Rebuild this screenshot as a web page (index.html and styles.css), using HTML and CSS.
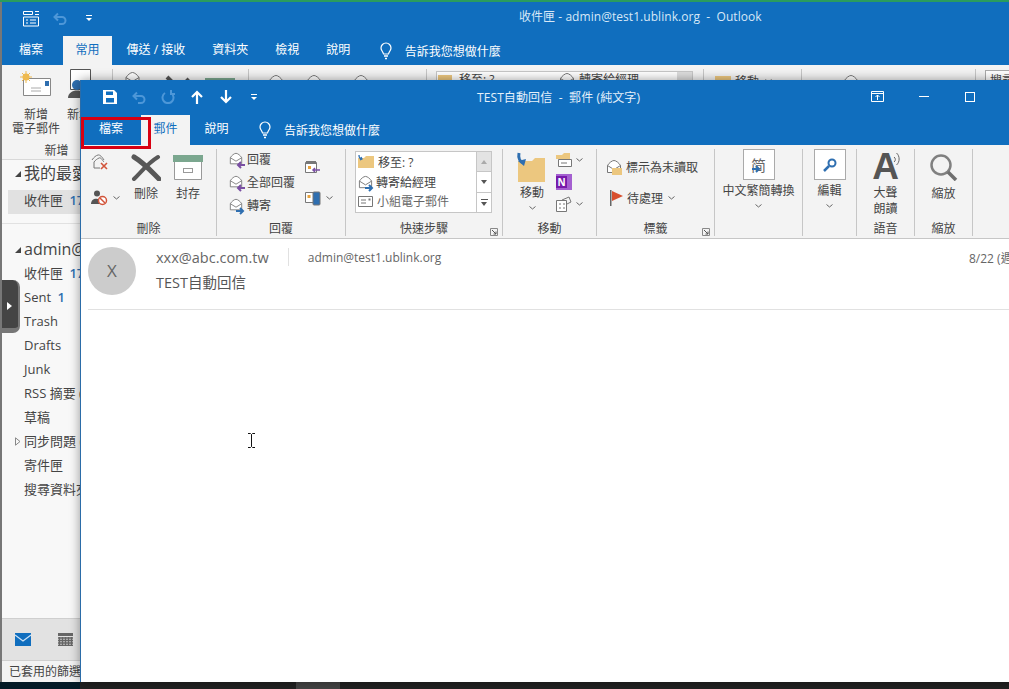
FILE: index.html
```html
<!DOCTYPE html>
<html lang="zh-Hant">
<head>
    <meta charset="UTF-8">
    <title>TEST自動回信 - 郵件 (純文字)</title>
    <link rel="stylesheet" href="styles.css">
</head>
<body>
    <svg class="defs" width="0" height="0">
        <symbol id="mail-open" viewBox="0 0 16 16">
            <path d="M1.500 6.500C3 4 6 1.500 8 1.500s5 2.500 6.500 5v7h-13z" fill="#fff" stroke="#777"/>
            <path d="M1.500 6.500 8 10.500l6.500-4" fill="none" stroke="#777"/>
        </symbol>
        <symbol id="arrow-left" viewBox="0 0 9 8">
            <path d="M9 4H3M5 1 2 4l3 3" fill="none" stroke="#7a4fa3" stroke-width="2"/>
        </symbol>
        <symbol id="arrow-right" viewBox="0 0 9 8">
            <path d="M0 4h6M4 1l3 3-3 3" fill="none" stroke="#2f6fb0" stroke-width="2"/>
        </symbol>
        <symbol id="chev" viewBox="0 0 7 4">
            <path d="M.5.5 3.500 3l3-2.500" fill="none" stroke="#666"/>
        </symbol>
        <symbol id="launcher" viewBox="0 0 8 8">
            <path d="M.5.5h7v7h-7z" fill="none" stroke="#888"/>
            <path d="M2 2l4 4M6 3.500V6H3.500" fill="none" stroke="#555"/>
        </symbol>
        <symbol id="drop" viewBox="0 0 8 8">
            <path d="M1 1.500h6" stroke="#fff" fill="none"/>
            <path d="M1 4h6L4 7z" fill="#fff"/>
        </symbol>
        <symbol id="bulb" viewBox="0 0 12 18">
            <path d="M3.500 12C3 9.500 1 8.500 1 6a5 5 0 0 1 10 0c0 2.500-2 3.500-2.500 6z" fill="none" stroke="#fff" stroke-width="1.200"/>
            <path d="M4 14h4M5 16.500h2" stroke="#fff" stroke-width="1.300"/>
        </symbol>
    </svg>

    <div class="desktop">
        <div class="green-line"></div>

        <!-- back window -->
        <div class="outlook">
            <div class="title-bar">
                <div class="qat back-qat">
                    <svg width="18" height="17" viewBox="0 0 18 17"><path d="M1.500 1.500h9v3h-9zM13 1.500h4M13 4.500h4M1.500 7h15v9h-15zM4 10h2M8 10h6M4 13h2M8 13h6" fill="none" stroke="#fff"/></svg>
                    <svg width="14" height="14" viewBox="0 0 14 14"><path d="M2 6h7a3.500 3.500 0 0 1 0 7H6M5 2.500 1.500 6 5 9.500" fill="none" stroke="#4d97d8" stroke-width="2"/></svg>
                    <svg width="8" height="8"><use href="#drop"/></svg>
                </div>
                <div class="back-title">收件匣 - admin@test1.ublink.org&nbsp; - &nbsp;Outlook</div>
            </div>
            <div class="tabs back-tabs">
                <span class="tab tab-file">檔案</span>
                <span class="tab active">常用</span>
                <span class="tab">傳送 / 接收</span>
                <span class="tab">資料夾</span>
                <span class="tab">檢視</span>
                <span class="tab">說明</span>
                <svg class="bulb" width="12" height="18"><use href="#bulb"/></svg>
                <span class="tell">告訴我您想做什麼</span>
            </div>
            <div class="back-ribbon">
                <div class="back-group bg-new">
                    <div class="back-btns">
                        <div class="back-btn new-mail">
                            <svg width="32" height="26" viewBox="0 0 32 26">
                                <path d="M3.500 7.500h27v17h-27z" fill="#fff" stroke="#888"/>
                                <path d="M11 17h10M11 20h10" stroke="#aaa"/>
                                <rect x="25" y="10" width="4" height="5" fill="#2f6fb0"/>
                                <circle cx="6" cy="6" r="3.500" fill="#eeb94f"/>
                                <path d="M6 0v12M0 6h12M2 2l8 8M10 2l-8 8" stroke="#eeb94f"/>
                            </svg>
                            <span>新增<br>電子郵件</span>
                        </div>
                        <div class="back-btn new-item">
                            <svg width="26" height="30" viewBox="0 0 26 30">
                                <path d="M3.500.5h20v20h-20z" fill="#fff" stroke="#555"/>
                                <circle cx="10" cy="16" r="5" fill="#2f6fb0"/>
                                <path d="M1 29c0-10 18-10 18 0z" fill="#555"/>
                            </svg>
                            <span>新增項目</span>
                        </div>
                    </div>
                    <div class="back-label">新增</div>
                </div>
                <div class="back-group bg-del">
                    <svg class="peek-mail" width="17" height="16"><use href="#mail-open"/></svg>
                    <svg class="peek-x" width="26" height="14" viewBox="0 0 26 14"><path d="M2 2l10 10M24 4l-8 8" stroke="#555" stroke-width="4"/></svg>
                    <span class="peek-archive"></span>
                </div>
                <div class="back-group bg-reply">
                    <svg width="16" height="16"><use href="#mail-open"/></svg>
                    <svg width="16" height="16"><use href="#mail-open"/></svg>
                    <svg class="peek-third" width="16" height="16"><use href="#mail-open"/></svg>
                </div>
                <div class="back-group bg-quick">
                    <div class="back-box">
                        <span class="peek-folder small"></span>
                        <span class="box-move">移至: ?</span>
                        <svg width="16" height="16"><use href="#mail-open"/></svg>
                        <span class="box-forward">轉寄給經理</span>
                        <span class="back-scroll"></span>
                    </div>
                </div>
                <div class="back-group bg-move">
                    <span class="peek-folder"></span>
                    <span>移動</span>
                    <svg class="peek-chev" width="7" height="4"><use href="#chev"/></svg>
                </div>
                <div class="back-group bg-tag">
                    <svg width="16" height="16"><use href="#mail-open"/></svg>
                </div>
                <div class="back-group bg-search">
                    <span class="search-box">搜尋人員</span>
                </div>
            </div>

            <div class="nav">
                <div class="nav-list">
                    <div class="nav-head"><span class="caret"></span>我的最愛</div>
                    <div class="nav-item selected">收件匣 <b>17</b></div>
                    <div class="nav-rule"></div>
                    <div class="nav-head"><span class="caret"></span>admin@test1.ublink.org</div>
                    <div class="nav-item">收件匣 <b>17</b></div>
                    <div class="nav-item">Sent <b>1</b></div>
                    <div class="nav-item">Trash</div>
                    <div class="nav-item">Drafts</div>
                    <div class="nav-item">Junk</div>
                    <div class="nav-item">RSS 摘要 (1)</div>
                    <div class="nav-item">草稿</div>
                    <div class="nav-item"><svg class="caret-open" width="6" height="9" viewBox="0 0 6 9"><path d="M.5.8 5 4.500.5 8.200z" fill="none" stroke="#888"/></svg>同步問題 (1)</div>
                    <div class="nav-item">寄件匣</div>
                    <div class="nav-item">搜尋資料夾</div>
                </div>
                <div class="nav-switch">
                    <span class="switch-mail">
                        <svg width="16" height="13" viewBox="0 0 16 13"><rect width="16" height="13" fill="#106ebe"/><path d="M0 2l8 6 8-6" fill="none" stroke="#cfe4f7" stroke-width="1.200"/></svg>
                    </span>
                    <svg width="15" height="13" viewBox="0 0 15 13"><rect width="15" height="3" fill="#666"/><path d="M0 5h15M0 7.500h15M0 10h15M0 12.500h15M1.500 4v9M4.500 4v9M7.500 4v9M10.500 4v9M13.500 4v9" stroke="#666" stroke-width="1.500"/></svg>
                </div>
                <div class="status-bar">已套用的篩選</div>
            </div>
        </div>

        <div class="taskbar">
            <span class="task-start"></span>
            <span class="task-app"></span>
        </div>

        <span class="nav-handle"><span class="handle-arrow"></span></span>

        <!-- message window -->
        <div class="msg-window">
            <div class="title-bar">
                <div class="qat msg-qat">
                    <svg width="14" height="14" viewBox="0 0 14 14"><path d="M0 0h11l3 3v11H0z" fill="#fff"/><path d="M3 1.500h7v3.500H3zM3 8h8v4.500H3z" fill="#106ebe"/></svg>
                    <svg width="14" height="14" viewBox="0 0 14 14"><path d="M2 6h7a3.500 3.500 0 0 1 0 7H6M5 2.500 1.500 6 5 9.500" fill="none" stroke="#4d97d8" stroke-width="2"/></svg>
                    <svg width="14" height="14" viewBox="0 0 14 14"><path d="M4 3a5.500 5.500 0 1 0 6 0M10 0v4h4" fill="none" stroke="#4d97d8" stroke-width="2"/></svg>
                    <svg width="14" height="14" viewBox="0 0 14 14"><path d="M7 14V2M2 7l5-5 5 5" fill="none" stroke="#fff" stroke-width="2.200"/></svg>
                    <svg width="14" height="14" viewBox="0 0 14 14"><path d="M7 0v12M2 7l5 5 5-5" fill="none" stroke="#fff" stroke-width="2.200"/></svg>
                    <svg class="qat-drop" width="8" height="8"><use href="#drop"/></svg>
                </div>
                <div class="msg-title">TEST自動回信&nbsp; - &nbsp;郵件 (純文字)</div>
                <div class="win-controls">
                    <svg width="13" height="11" viewBox="0 0 13 11"><path d="M.5.500h12v10H.5zM.5 2.500h12M6.500 9V4M4.500 6l2-2 2 2" fill="none" stroke="#fff"/></svg>
                    <span class="win-min"></span>
                    <span class="win-max"></span>
                </div>
            </div>
            <div class="tabs msg-tabs">
                <span class="tab tab-file">檔案</span>
                <span class="tab active">郵件</span>
                <span class="tab">說明</span>
                <svg class="bulb" width="12" height="18"><use href="#bulb"/></svg>
                <span class="tell">告訴我您想做什麼</span>
            </div>
            <span class="red-box"></span>

            <div class="ribbon">
                <div class="group g-delete">
                    <div class="group-body">
                        <div class="stack">
                            <svg width="18" height="18" viewBox="0 0 18 18"><path d="M1 7C3 4 5 2.500 7 2s4 2 6 5M3 9c1.500-2 3-3 5-4s3 2 5 4M3 9v6h6" fill="none" stroke="#777"/><path d="M10 10l6 6M16 10l-6 6" stroke="#d2543a" stroke-width="1.600"/></svg>
                            <div class="icon-chev">
                                <svg width="18" height="16" viewBox="0 0 18 16"><circle cx="6" cy="3.500" r="3" fill="#555"/><path d="M0 14c0-7 10-7 10 0z" fill="#555"/><circle cx="11.500" cy="10.500" r="4" fill="#fff" stroke="#d2543a" stroke-width="1.500"/><path d="M9 8l5 5" stroke="#d2543a" stroke-width="1.500"/></svg>
                                <svg width="7" height="4"><use href="#chev"/></svg>
                            </div>
                        </div>
                        <div class="big-btn">
                            <div class="big-icon">
                                <svg width="30" height="27" viewBox="0 0 30 27"><path d="M3 3c10 6 16 13 25 22" fill="none" stroke="#585858" stroke-width="5" stroke-linecap="round"/><path d="M27 3C17 9 12 16 3 25" fill="none" stroke="#585858" stroke-width="4" stroke-linecap="round"/></svg>
                            </div>
                            <span>刪除</span>
                        </div>
                        <div class="big-btn">
                            <div class="big-icon">
                                <svg width="30" height="25" viewBox="0 0 30 25"><rect width="30" height="7" fill="#7ba78f"/><path d="M1.500 7v17.500h27V7" fill="#fff" stroke="#999"/><rect x="10.500" y="13.500" width="9" height="4" fill="none" stroke="#999"/></svg>
                            </div>
                            <span>封存</span>
                        </div>
                    </div>
                    <div class="group-label">刪除</div>
                </div>

                <div class="group g-reply">
                    <div class="group-body">
                        <div class="rows">
                            <div class="row">
                                <span class="mail-icon"><svg width="14" height="14"><use href="#mail-open"/></svg><svg class="mail-arrow" width="9" height="8"><use href="#arrow-left"/></svg></span>
                                <span>回覆</span>
                            </div>
                            <div class="row">
                                <span class="mail-icon"><svg width="14" height="14"><use href="#mail-open"/></svg><svg class="mail-arrow" width="9" height="8"><use href="#arrow-left"/></svg></span>
                                <span>全部回覆</span>
                            </div>
                            <div class="row">
                                <span class="mail-icon"><svg width="14" height="14"><use href="#mail-open"/></svg><svg class="mail-arrow" width="9" height="8"><use href="#arrow-right"/></svg></span>
                                <span>轉寄</span>
                            </div>
                        </div>
                        <div class="reply-side">
                            <svg width="15" height="15" viewBox="0 0 15 15"><path d="M.5 2.500h11v10H.5z" fill="#fff" stroke="#777"/><rect x="1" y="1" width="10" height="3" fill="#777"/><rect x="3" y="6" width="3" height="3" fill="#e8a33d"/><path d="M15 10H8M10 8l-2 2 2 2" fill="none" stroke="#7a4fa3" stroke-width="1.500"/></svg>
                            <div class="icon-chev">
                                <svg width="17" height="16" viewBox="0 0 17 16"><path d="M.5 2.500h10v10H.5z" fill="#fff" stroke="#777"/><rect x="2.500" y="5" width="3" height="3" fill="#e8a33d"/><rect x="8" y="2" width="7" height="13" rx="1" fill="#2f6fb0" stroke="#777"/></svg>
                                <svg width="7" height="4"><use href="#chev"/></svg>
                            </div>
                        </div>
                    </div>
                    <div class="group-label">回覆</div>
                </div>

                <div class="group g-quick">
                    <div class="group-body">
                        <div class="quick-box">
                            <div class="quick-list">
                                <div class="quick-row">
                                    <svg width="16" height="14" viewBox="0 0 16 14"><path d="M0 3h6l2-2h8v12H0z" fill="#ecc77f"/><path d="M1 0c0 3 1 4 3 4M2 5l2-1-1-2" fill="none" stroke="#2f6fb0" stroke-width="1.300"/></svg>
                                    <span>移至: ?</span>
                                </div>
                                <div class="quick-row">
                                    <span class="mail-icon"><svg width="15" height="15"><use href="#mail-open"/></svg><svg class="mail-arrow" width="9" height="8"><use href="#arrow-right"/></svg></span>
                                    <span>轉寄給經理</span>
                                </div>
                                <div class="quick-row">
                                    <svg width="15" height="11" viewBox="0 0 15 11"><path d="M.5.500h14v10H.5z" fill="#fff" stroke="#777"/><path d="M3 4h5M3 7h5" stroke="#777"/><rect x="10.500" y="2.500" width="2" height="2" fill="#777"/></svg>
                                    <span>小組電子郵件</span>
                                </div>
                            </div>
                            <div class="quick-scroll">
                                <span class="scroll-up"><i class="tri-up"></i></span>
                                <span><i class="tri-down"></i></span>
                                <span class="scroll-more"><i class="tri-down"></i></span>
                            </div>
                        </div>
                    </div>
                    <div class="group-label">快速步驟</div>
                    <svg class="launcher" width="8" height="8"><use href="#launcher"/></svg>
                </div>

                <div class="group g-move">
                    <div class="group-body">
                        <div class="big-btn">
                            <div class="big-icon">
                                <svg class="move-folder" width="30" height="30" viewBox="0 0 30 30"><path d="M2 9h14l3-3h10v24H2z" fill="#ecc77f"/><path d="M3 1c-1 5 1 9 5 10" fill="none" stroke="#2f6fb0" stroke-width="3"/><path d="M2 9l6 5 2-7z" fill="#2f6fb0"/></svg>
                            </div>
                            <span>移動</span>
                            <svg class="big-chev" width="7" height="4"><use href="#chev"/></svg>
                        </div>
                        <div class="rows move-side">
                            <div class="icon-chev">
                                <svg width="16" height="16" viewBox="0 0 16 16"><path d="M0 3h6l2-2h6v6H0z" fill="#ecc77f"/><path d="M2.500 7.500h13v7h-13z" fill="#fff" stroke="#777"/><path d="M5 11h6" stroke="#777"/></svg>
                                <svg width="7" height="4"><use href="#chev"/></svg>
                            </div>
                            <div class="icon-chev">
                                <span class="onenote"><span class="onenote-n">N</span></span>
                            </div>
                            <div class="icon-chev">
                                <svg width="16" height="16" viewBox="0 0 16 16"><path d="M.5 4.500h10v11H.5z" fill="#fff" stroke="#777"/><path d="M6 4 13 1l2 5-4 2" fill="none" stroke="#777"/><path d="M3 8h2M7 8h2M3 12h2M7 12h2" stroke="#777"/></svg>
                                <svg width="7" height="4"><use href="#chev"/></svg>
                            </div>
                        </div>
                    </div>
                    <div class="group-label">移動</div>
                </div>

                <div class="group g-tags">
                    <div class="group-body tags-body">
                        <div class="row">
                            <span class="mail-icon"><svg width="16" height="16"><use href="#mail-open"/></svg><span class="tag-folder"></span></span>
                            <span>標示為未讀取</span>
                        </div>
                        <div class="row flag-row">
                            <svg width="13" height="16" viewBox="0 0 13 16"><rect width="1.500" height="16" fill="#666"/><path d="M2 1l11 5-11 5z" fill="#d8502f"/></svg>
                            <span>待處理</span>
                            <svg width="7" height="4"><use href="#chev"/></svg>
                        </div>
                    </div>
                    <div class="group-label">標籤</div>
                    <svg class="launcher" width="8" height="8"><use href="#launcher"/></svg>
                </div>

                <div class="group g-conv">
                    <div class="group-body tool-body">
                        <div class="tool-box"><span class="conv-char">简</span><svg class="conv-arrow" width="9" height="8"><use href="#arrow-right"/></svg></div>
                        <span class="tool-text">中文繁簡轉換</span>
                        <svg width="7" height="4"><use href="#chev"/></svg>
                    </div>
                    <div class="group-label"></div>
                </div>

                <div class="group g-edit">
                    <div class="group-body tool-body">
                        <div class="tool-box">
                            <svg width="14" height="14" viewBox="0 0 14 14"><circle cx="9" cy="5" r="3.500" fill="none" stroke="#2f6fb0" stroke-width="2"/><path d="M6 8l-5 5" stroke="#2f6fb0" stroke-width="2.500"/></svg>
                        </div>
                        <span class="tool-text">編輯</span>
                        <svg width="7" height="4"><use href="#chev"/></svg>
                    </div>
                    <div class="group-label"></div>
                </div>

                <div class="group g-read">
                    <div class="group-body">
                        <div class="big-btn">
                            <div class="big-icon read-icon">
                                <span class="big-a">A</span>
                                <svg class="read-waves" width="8" height="14" viewBox="0 0 8 14"><path d="M1 5a3 3 0 0 1 0 5M3.500 1c3.500 3 3.500 9 0 12" fill="none" stroke="#666"/></svg>
                            </div>
                            <span>大聲<br>朗讀</span>
                        </div>
                    </div>
                    <div class="group-label">語音</div>
                </div>

                <div class="group g-zoom">
                    <div class="group-body">
                        <div class="big-btn">
                            <div class="big-icon">
                                <svg width="28" height="27" viewBox="0 0 28 27"><circle cx="11" cy="11" r="9.500" fill="none" stroke="#808080" stroke-width="2.500"/><path d="M18 18l8 8" stroke="#6e6e6e" stroke-width="3.500"/></svg>
                            </div>
                            <span>縮放</span>
                        </div>
                    </div>
                    <div class="group-label">縮放</div>
                </div>
            </div>

            <div class="msg-head">
                <div class="avatar">X</div>
                <div class="msg-info">
                    <div class="from-row">
                        <span class="from">xxx@abc.com.tw</span>
                        <span class="vline"></span>
                        <span class="to">admin@test1.ublink.org</span>
                    </div>
                    <div class="subject">TEST自動回信</div>
                </div>
                <div class="date">8/22 (週三) 上午 10:15</div>
            </div>
        </div>

        <svg class="ibeam" width="7" height="15" viewBox="0 0 7 15"><path d="M0 .5h2.500l1 1 1-1H7M3.500 1.500v12M0 14.500h2.500l1-1 1 1H7" fill="none" stroke="#111"/></svg>
    </div>
</body>
</html>
```

FILE: styles.css
```css
* {
    box-sizing: border-box;
}

body {
    margin: 0;
    overflow: hidden;
    font-family: "Open Sans", "Noto Sans CJK TC", sans-serif;
    font-size: 12px;
    color: #444;
}

.defs {
    position: absolute;
}

svg {
    display: block;
    flex: none;
}

.desktop {
    position: relative;
    display: flex;
    flex-direction: column;
    width: 1009px;
    height: 689px;
    overflow: hidden;
    background-color: #777;
}

.green-line {
    height: 2px;
    flex: none;
    background-color: #2a9c5e;
}

.taskbar {
    display: flex;
    height: 7px;
    flex: none;
    background-color: #222;
}

.task-start {
    width: 80px;
    background-color: #031a26;
}

.task-app {
    width: 44px;
    margin-left: 216px;
    background-color: #444;
}

/* shared window chrome */
.title-bar {
    display: flex;
    align-items: center;
    background-color: #106ebe;
    color: #fff;
}

.qat {
    display: flex;
    align-items: center;
}

.tabs {
    display: flex;
    align-items: center;
    background-color: #106ebe;
    color: #fff;
}

.tab {
    padding: 0 12.5px;
    height: 100%;
    line-height: 28px;
    white-space: nowrap;
}

.tab + .tab {
    margin-left: 2px;
}

.tab.active {
    background-color: #f3f3f3;
    color: #106ebe;
}

.tab-file {
    margin-right: 5.5px;
}

.bulb {
    margin-left: 17px;
}

.tell {
    margin-left: 13px;
    white-space: nowrap;
}

/* back window */
.outlook {
    display: flex;
    flex-direction: column;
    flex: 1;
    min-height: 0;
    margin-left: 2px;
    background-color: #f3f3f3;
}

.outlook .title-bar {
    height: 34px;
    flex: none;
    padding-bottom: 2px;
}

.back-qat {
    padding-left: 20px;
}

.back-qat svg:nth-child(2) {
    margin-left: 13px;
}

.back-qat svg:nth-child(3) {
    margin-left: 18px;
}

.back-title {
    margin: 0 0 4px 426px;
    color: #d7e8f7;
    font-size: 12px;
    letter-spacing: 0.05px;
    white-space: nowrap;
}

.back-tabs {
    height: 29px;
    flex: none;
    padding-left: 4.5px;
}

.back-ribbon {
    display: flex;
    height: 95px;
    flex: none;
    padding-top: 4px;
    border-bottom: 1px solid #d8d8d8;
}

.back-group {
    display: flex;
    height: 90px;
    flex: none;
    border-right: 1px solid #c6c6c6;
}

.bg-new {
    flex-direction: column;
    width: 111px;
}

.back-btns {
    display: flex;
    flex: 1;
    padding-left: 4px;
}

.back-btn {
    display: flex;
    flex-direction: column;
    align-items: center;
    text-align: center;
    line-height: 14px;
    white-space: nowrap;
}

.back-btn svg {
    height: 30px;
    margin-bottom: 9px;
}

.new-mail {
    width: 60px;
}

.new-item {
    align-items: flex-start;
    width: 26px;
    margin-left: 1px;
}

.back-label {
    padding-right: 1px;
    text-align: center;
    line-height: 16px;
}

.bg-del {
    width: 136px;
    padding: 2px 0 0 11px;
}

.peek-mail {
    margin-right: 24px;
}

.peek-x {
    margin: 4px 14px 0 0;
}

.peek-archive {
    width: 30px;
    height: 8px;
    margin-top: 7px;
    background-color: #7ba78f;
}

.bg-reply {
    gap: 22px;
    width: 178px;
    padding: 5px 0 0 19px;
}

.peek-third {
    margin-left: 9px;
}

.bg-quick {
    width: 277px;
    padding: 2px 0 0 9px;
}

.back-box {
    display: flex;
    width: 257px;
    height: 62px;
    padding-left: 1px;
    background-color: #fff;
    border: 1px solid #c6c6c6;
    line-height: 16px;
}

.back-box span {
    white-space: nowrap;
}

.box-move {
    width: 100px;
    margin-left: 7px;
}

.box-forward {
    margin-left: 4px;
}

.back-scroll {
    width: 15px;
    height: 100%;
    margin-left: auto;
    background-color: #ddd;
}

.bg-move {
    gap: 4px;
    width: 98px;
    padding: 3px 0 0 11px;
}

.peek-folder {
    width: 16px;
    height: 10px;
    margin-top: 4px;
    background-color: #ecc77f;
}

.peek-folder.small {
    width: 14px;
    margin-top: 3px;
}

.peek-chev {
    margin: 7px 0 0 2px;
}

.bg-tag {
    width: 174px;
    padding: 5px 0 0 41px;
}

.bg-search {
    width: 120px;
    border-right: none;
    padding: 1px 0 0 9px;
}

.search-box {
    width: 120px;
    height: 22px;
    padding-left: 4px;
    background-color: #fff;
    border: 1px solid #aaa;
    white-space: nowrap;
}

.nav {
    display: flex;
    flex-direction: column;
    flex: 1;
    min-height: 0;
    font-size: 13px;
}

.nav-list {
    flex: 1;
    padding-top: 1px;
    background-color: #f8f8f8;
    white-space: nowrap;
    overflow: hidden;
}

.nav-head {
    position: relative;
    height: 24px;
    padding-left: 22px;
    font-size: 16px;
    line-height: 24px;
}

.caret {
    position: absolute;
    top: 10px;
    left: 13px;
    border-style: solid;
    border-width: 0 0 6px 6px;
    border-color: transparent transparent #444 transparent;
}

.nav-item {
    position: relative;
    width: 200px;
    height: 24px;
    padding-left: 22px;
    line-height: 24px;
}

.nav-item b {
    margin-left: 3px;
    color: #2f6fb0;
    font-weight: 600;
}

.nav-item.selected {
    width: 78px;
    margin: 5px 0 0 6px;
    padding-left: 16px;
    background-color: #e1e1e1;
    line-height: 21px;
    overflow: hidden;
}

.nav-rule {
    height: 1px;
    margin: 9px 0 13px;
    background-color: #e1e1e1;
}

.caret-open {
    position: absolute;
    top: 8px;
    left: 13px;
}

.nav-switch {
    display: flex;
    align-items: center;
    height: 42px;
    flex: none;
    gap: 27px;
    padding-left: 13px;
    background-color: #e2e2e2;
    border-top: 1px solid #cfcfcf;
}

.status-bar {
    height: 22px;
    flex: none;
    padding-left: 7px;
    background-color: #f3f3f3;
    border-top: 1px solid #cfcfcf;
    font-size: 12px;
    line-height: 21px;
    white-space: nowrap;
}

.nav-handle {
    position: absolute;
    top: 280px;
    left: 2px;
    width: 18px;
    height: 53px;
    background-color: #444;
    border-right: 2px solid #777;
    border-bottom: 5px solid #777;
    border-radius: 0 7px 7px 0;
}

.handle-arrow {
    position: absolute;
    top: 22px;
    left: 5px;
    border-style: solid;
    border-width: 4px 0 4px 5px;
    border-color: transparent transparent transparent #fff;
}

/* message window */
.msg-window {
    position: absolute;
    top: 80px;
    left: 80px;
    display: flex;
    flex-direction: column;
    width: 1040px;
    height: 602px;
    background-color: #fff;
    border-left: 1px solid #2b6ca8;
    box-shadow: 0 0 10px rgba(0, 0, 0, 0.4);
}

.msg-window .title-bar {
    height: 35px;
    flex: none;
    padding-bottom: 2px;
}

.msg-qat {
    gap: 15px;
    padding-left: 22px;
}

.qat-drop {
    margin-left: 2px;
}

.msg-title {
    margin-left: 219px;
    color: #e4f0fa;
    letter-spacing: 0.1px;
    white-space: nowrap;
}

.win-controls {
    display: flex;
    align-items: center;
    margin-left: 231px;
}

.win-min {
    width: 10px;
    height: 1px;
    margin-left: 35px;
    background-color: #fff;
}

.win-max {
    width: 10px;
    height: 10px;
    margin-left: 36px;
    border: 1px solid #fff;
}

.msg-tabs {
    height: 30px;
    flex: none;
    padding-left: 5.5px;
}

.msg-tabs .tab-file {
    margin-right: 3.5px;
}

.msg-tabs .bulb {
    margin-left: 18px;
}

.red-box {
    position: absolute;
    top: 37px;
    left: 0;
    width: 70px;
    height: 32px;
    border: 3px solid #d80012;
}

.ribbon {
    display: flex;
    height: 94px;
    flex: none;
    background-color: #f3f3f3;
    border-bottom: 1px solid #c6c6c6;
}

.group {
    position: relative;
    display: flex;
    flex-direction: column;
    height: 87px;
    margin-top: 4px;
    flex: none;
    border-right: 1px solid #c6c6c6;
}

.group-body {
    display: flex;
    flex: 1;
    min-height: 0;
}

.group-label {
    height: 15px;
    flex: none;
    text-align: center;
    line-height: 15px;
}

.launcher {
    position: absolute;
    right: 4px;
    bottom: 0;
}

.g-delete { width: 136px; }
.g-reply { width: 129px; }
.g-quick { width: 157px; }
.g-move { width: 94px; }
.g-tags { width: 118px; }
.g-conv { width: 88px; }
.g-edit { width: 54px; }
.g-read { width: 58px; }
.g-zoom { width: 58px; }

.g-delete .group-body {
    padding-left: 10px;
}

.stack {
    display: flex;
    flex-direction: column;
    gap: 19px;
    width: 34px;
    padding-top: 4px;
}

.icon-chev {
    display: flex;
    align-items: center;
    gap: 4px;
}

.big-btn {
    display: flex;
    flex-direction: column;
    align-items: center;
    width: 42px;
    text-align: center;
    line-height: 16px;
}

.big-icon {
    display: flex;
    align-items: center;
    justify-content: center;
    height: 37px;
    flex: none;
}

.big-chev {
    margin-top: 5px;
}

.g-move .big-icon {
    height: 36px;
}

.move-folder {
    margin-left: -2px;
}

.g-reply .group-body {
    padding-left: 12px;
}

.rows {
    display: flex;
    flex-direction: column;
}

.row {
    display: flex;
    align-items: center;
    gap: 4px;
    height: 23px;
    white-space: nowrap;
}

.g-reply .rows {
    margin-top: -2px;
}

.mail-icon {
    position: relative;
    display: block;
    flex: none;
    width: 14px;
    height: 14px;
}

.mail-arrow {
    position: absolute;
    right: -2px;
    bottom: -3px;
}

.reply-side {
    display: flex;
    flex-direction: column;
    gap: 15px;
    margin-left: auto;
    padding: 11px 12px 0 0;
}

.g-quick .group-body {
    padding: 2px 0 0 9px;
}

.quick-box {
    display: flex;
    width: 137px;
    height: 62px;
    background-color: #fff;
    border: 1px solid #c6c6c6;
}

.quick-list {
    flex: 1;
    min-width: 0;
}

.quick-row {
    display: flex;
    align-items: center;
    gap: 4px;
    height: 19.5px;
    padding-left: 2px;
    white-space: nowrap;
}

.quick-row:first-child {
    height: 20px;
}

.quick-row:last-child {
    color: #666;
}

.quick-scroll {
    display: flex;
    flex-direction: column;
    width: 15px;
    flex: none;
    border-left: 1px solid #c6c6c6;
}

.quick-scroll span {
    display: flex;
    align-items: center;
    justify-content: center;
    flex: 1;
    border-bottom: 1px solid #c6c6c6;
}

.quick-scroll span:last-child {
    border-bottom: none;
}

.scroll-up {
    background-color: #e3e3e3;
}

.quick-scroll .scroll-more {
    flex-direction: column;
    gap: 2px;
}

.scroll-more::before {
    content: "";
    width: 7px;
    height: 1px;
    background-color: #555;
}

.tri-up {
    border-style: solid;
    border-width: 0 3.5px 4px;
    border-color: transparent transparent #aaa;
}

.tri-down {
    border-style: solid;
    border-width: 4px 3.5px 0;
    border-color: #555 transparent transparent;
}

.g-move .group-body {
    padding-left: 8px;
}

.move-side {
    gap: 6px;
    margin: 3px 0 0 3px;
}

.onenote {
    display: block;
    position: relative;
    width: 16px;
    height: 16px;
    background-color: #a45fd0;
}

.onenote-n {
    position: absolute;
    top: 2px;
    left: 0;
    width: 11px;
    height: 12px;
    background-color: #7719aa;
    color: #fff;
    font-size: 10px;
    font-weight: 700;
    line-height: 12px;
    text-align: center;
}

.tags-body {
    flex-direction: column;
    padding: 6px 0 0 9px;
}

.tags-body .mail-icon {
    width: 16px;
    height: 16px;
}

.tag-folder {
    position: absolute;
    right: 0;
    bottom: 0;
    width: 10px;
    height: 7px;
    background-color: #ecc77f;
}

.flag-row {
    margin-top: 8px;
    padding-left: 4px;
}

.flag-row svg:last-child {
    margin-left: 1px;
}

.tool-body {
    flex-direction: column;
    align-items: center;
}

.tool-box {
    position: relative;
    display: flex;
    align-items: center;
    justify-content: center;
    width: 32px;
    height: 31px;
    flex: none;
    background-color: #fff;
    border: 1px solid #aaa;
}

.conv-char {
    color: #666;
    font-size: 15px;
    font-family: "Noto Sans CJK SC", sans-serif;
}

.conv-arrow {
    position: absolute;
    bottom: 6px;
    left: 8px;
}

.tool-text {
    margin-top: 3px;
    margin-bottom: 5px;
    line-height: 16px;
    white-space: nowrap;
}

.g-read .big-btn,
.g-zoom .big-btn {
    width: 100%;
}

.read-icon {
    position: relative;
    width: 100%;
    height: 36px;
}

.big-a {
    color: #555;
    font-family: "Liberation Sans", sans-serif;
    font-size: 37px;
    font-weight: 700;
    line-height: 36px;
}

.read-waves {
    position: absolute;
    top: 3px;
    right: 13px;
}

.msg-head {
    display: flex;
    height: 71px;
    flex: none;
    margin-left: 7px;
    border-bottom: 1px solid #e1e1e1;
}

.avatar {
    width: 48px;
    height: 48px;
    margin-top: 8px;
    flex: none;
    background-color: #ccc;
    border-radius: 50%;
    color: #666;
    font-size: 17px;
    line-height: 48px;
    text-align: center;
}

.msg-info {
    flex: 1;
    margin-left: 20px;
    padding-top: 8px;
}

.from-row {
    display: flex;
    align-items: center;
    height: 20px;
}

.from {
    color: #666;
    font-size: 14.5px;
}

.vline {
    width: 1px;
    height: 18px;
    margin: 0 19px;
    background-color: #e1e1e1;
}

.to {
    margin-top: 1px;
    color: #666;
}

.subject {
    margin-top: 4px;
    color: #555;
    font-size: 14.5px;
}

.date {
    width: 151px;
    flex: none;
    padding-top: 10px;
    color: #666;
    white-space: nowrap;
}

.ibeam {
    position: absolute;
    top: 433px;
    left: 248px;
}
```
